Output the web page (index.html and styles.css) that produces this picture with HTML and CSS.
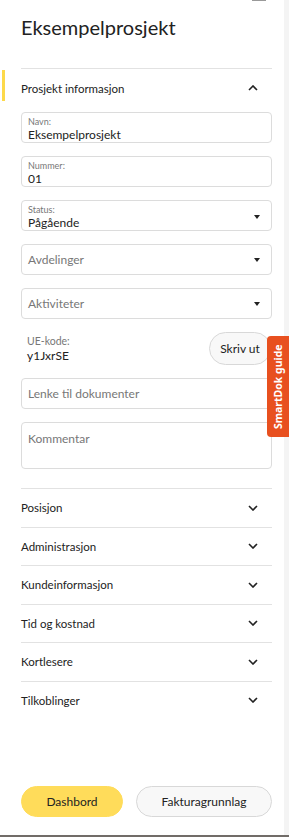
FILE: index.html
```html
<!DOCTYPE html>
<html lang="no">
<head>
  <meta charset="UTF-8">
  <meta name="viewport" content="width=device-width, initial-scale=1.0">
  <title>Eksempelprosjekt</title>
  <link rel="stylesheet" href="styles.css">
</head>
<body>
  <div class="page">
    <div class="panel">
      <div class="top-mark"></div>
      <h1 class="title">Eksempelprosjekt</h1>

      <div class="section open">
        <div class="section-head">
          <span>Prosjekt informasjon</span>
          <svg class="chev" width="10" height="6" viewBox="0 0 10 6"><path d="M1 5 L5 1 L9 5" fill="none" stroke="#222" stroke-width="1.6"/></svg>
        </div>
        <div class="section-body">
          <div class="field">
            <label>Navn:</label>
            <div class="value">Eksempelprosjekt</div>
          </div>
          <div class="field">
            <label>Nummer:</label>
            <div class="value">01</div>
          </div>
          <div class="field select">
            <div>
              <label>Status:</label>
              <div class="value">Pågående</div>
            </div>
            <span class="caret"></span>
          </div>
          <div class="field select empty">
            <div class="placeholder">Avdelinger</div>
            <span class="caret"></span>
          </div>
          <div class="field select empty">
            <div class="placeholder">Aktiviteter</div>
            <span class="caret"></span>
          </div>
          <div class="ue-row">
            <div class="ue-code">
              <div class="ue-label">UE-kode:</div>
              <div class="ue-value">y1JxrSE</div>
            </div>
            <button class="print-btn" type="button">Skriv ut</button>
          </div>
          <div class="field empty">
            <div class="placeholder">Lenke til dokumenter</div>
          </div>
          <div class="field empty textarea">
            <div class="placeholder">Kommentar</div>
          </div>
        </div>
      </div>

      <div class="section">
        <div class="section-head">
          <span>Posisjon</span>
          <svg class="chev" width="10" height="6" viewBox="0 0 10 6"><path d="M1 1 L5 5 L9 1" fill="none" stroke="#222" stroke-width="1.6"/></svg>
        </div>
      </div>
      <div class="section">
        <div class="section-head">
          <span>Administrasjon</span>
          <svg class="chev" width="10" height="6" viewBox="0 0 10 6"><path d="M1 1 L5 5 L9 1" fill="none" stroke="#222" stroke-width="1.6"/></svg>
        </div>
      </div>
      <div class="section">
        <div class="section-head">
          <span>Kundeinformasjon</span>
          <svg class="chev" width="10" height="6" viewBox="0 0 10 6"><path d="M1 1 L5 5 L9 1" fill="none" stroke="#222" stroke-width="1.6"/></svg>
        </div>
      </div>
      <div class="section">
        <div class="section-head">
          <span>Tid og kostnad</span>
          <svg class="chev" width="10" height="6" viewBox="0 0 10 6"><path d="M1 1 L5 5 L9 1" fill="none" stroke="#222" stroke-width="1.6"/></svg>
        </div>
      </div>
      <div class="section">
        <div class="section-head">
          <span>Kortlesere</span>
          <svg class="chev" width="10" height="6" viewBox="0 0 10 6"><path d="M1 1 L5 5 L9 1" fill="none" stroke="#222" stroke-width="1.6"/></svg>
        </div>
      </div>
      <div class="section">
        <div class="section-head">
          <span>Tilkoblinger</span>
          <svg class="chev" width="10" height="6" viewBox="0 0 10 6"><path d="M1 1 L5 5 L9 1" fill="none" stroke="#222" stroke-width="1.6"/></svg>
        </div>
      </div>

      <div class="actions">
        <button class="btn primary" type="button">Dashbord</button>
        <button class="btn secondary" type="button">Fakturagrunnlag</button>
      </div>
    </div>
  </div>

  <div class="guide-tab">SmartDok guide</div>
</body>
</html>
```

FILE: styles.css
```css
html, body {
  margin: 0;
  padding: 0;
}
body {
  background: #716c68;
  font-family: Lato, "Noto Sans", sans-serif;
  color: #222;
}
.page {
  height: 835px;
  background: #f4f4f4;
  overflow: hidden;
}
.panel {
  position: relative;
  width: 284px;
  height: 835px;
  box-sizing: border-box;
  background: #fff;
  padding: 0 12px 0 21px;
  display: flex;
  flex-direction: column;
}
.top-mark {
  position: absolute;
  top: 0;
  left: 252px;
  width: 14px;
  height: 1px;
  background: #999;
}
.title {
  font-size: 20px;
  font-weight: 400;
  margin: 0;
  padding: 14px 0 0;
  height: 54px;
  line-height: 27px;
  border-bottom: 1px solid #e2e2e2;
}
.section {
  position: relative;
}
.section + .section {
  border-top: 1px solid #e2e2e2;
}
.open + .section {
  margin-top: 19px;
}
.section-head {
  height: 37.5px;
  display: flex;
  align-items: center;
  justify-content: space-between;
  font-size: 11.5px;
  padding-right: 14px;
}
.open .section-head {
  height: 38px;
}
.chev {
  display: block;
}
.open .section-head::before {
  content: "";
  position: absolute;
  left: -19px;
  top: 1px;
  width: 3px;
  height: 31px;
  background: #fdd94a;
}
.section-body {
  padding-top: 5px;
  display: flex;
  flex-direction: column;
  gap: 13px;
}
.field {
  height: 31px;
  box-sizing: border-box;
  border: 1px solid #dcdcdc;
  border-radius: 4px;
  padding: 3px 6px 0;
  display: flex;
  align-items: center;
  justify-content: space-between;
}
.field:not(.select):not(.empty) {
  display: block;
}
.field label {
  display: block;
  font-size: 9px;
  line-height: 11px;
  color: #777;
}
.field .value {
  font-size: 12px;
  line-height: 15px;
  color: #222;
}
.field.empty {
  padding-top: 0;
}
.placeholder {
  font-size: 12px;
  color: #777;
}
.field.textarea {
  height: 47px;
  align-items: flex-start;
  padding-top: 8px;
}
.caret {
  width: 0;
  height: 0;
  border-left: 3.5px solid transparent;
  border-right: 3.5px solid transparent;
  border-top: 4px solid #222;
  margin-right: 5px;
}
.ue-row {
  display: flex;
  align-items: center;
  justify-content: space-between;
  height: 33px;
}
.ue-code {
  padding-left: 6px;
}
.ue-label {
  font-size: 10.5px;
  line-height: 13px;
  color: #777;
}
.ue-value {
  font-size: 12px;
  line-height: 15px;
  color: #222;
}
.print-btn {
  font-family: Lato, sans-serif;
  font-size: 12px;
  color: #222;
  background: #f8f8f8;
  border: 1px solid #d8d8d8;
  border-radius: 17px;
  height: 33px;
  width: 62px;
  margin-right: 1px;
  padding: 0;
}
.actions {
  margin-top: auto;
  margin-bottom: 18px;
  display: flex;
  gap: 13px;
}
.btn {
  height: 31px;
  border-radius: 16px;
  font-family: Lato, sans-serif;
  font-size: 12px;
  color: #222;
  padding: 0;
}
.btn.primary {
  width: 102px;
  background: #ffdc5a;
  border: 1px solid #ffdc5a;
}
.btn.secondary {
  flex: 1;
  background: #f8f8f8;
  border: 1px solid #d8d8d8;
}
.guide-tab {
  position: absolute;
  top: 336px;
  left: 267px;
  width: 22px;
  height: 101px;
  box-sizing: border-box;
  background: #e8501f;
  color: #fff;
  writing-mode: vertical-rl;
  transform: rotate(180deg);
  border-radius: 0 4px 4px 0;
  font-family: "Noto Sans", sans-serif;
  font-weight: 700;
  font-size: 10.5px;
  display: flex;
  align-items: center;
  justify-content: center;
}
```
